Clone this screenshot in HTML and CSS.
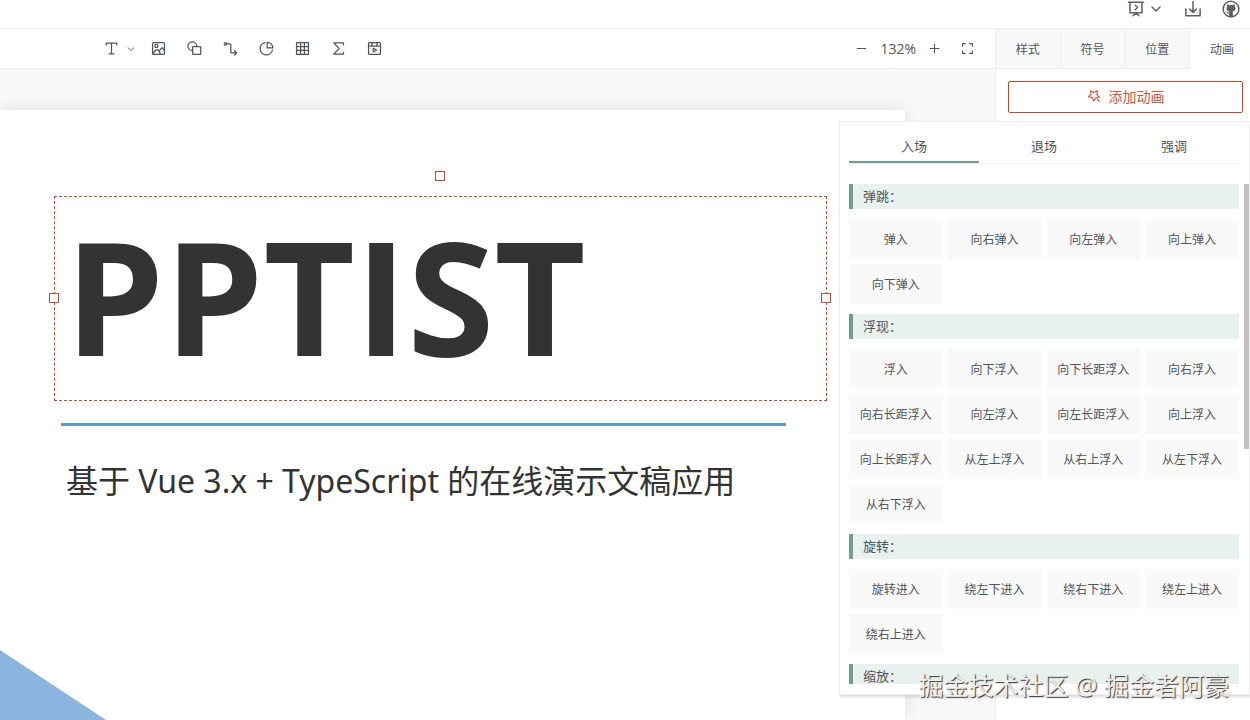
FILE: index.html
```html
<!DOCTYPE html>
<html lang="zh-CN">
<head>
  <meta charset="UTF-8" />
  <meta name="viewport" content="width=device-width, initial-scale=1.0"/>
  <title>PPTist</title>
  <link rel="stylesheet" href="styles.css">
</head>
<body>
  <div class="app">
    <header class="header">
      <button class="icon-btn screening" aria-label="放映">
        <svg class="icon" viewBox="0 0 48 48"><path d="M4 6h40M8 6h32v28H8zM22 14l6 6-6 6M16 42l8-7 8 7"/></svg>
        <svg class="icon arrow" viewBox="0 0 48 48"><path d="M8 16l16 16 16-16"/></svg>
      </button>
      <button class="icon-btn" aria-label="导出">
        <svg class="icon" viewBox="0 0 48 48"><path d="M5 24v18h38V24M33 24l-9 9-9-9M24 4v29"/></svg>
      </button>
      <a class="icon-btn" href="#" aria-label="GitHub">
        <svg class="icon" viewBox="0 0 48 48"><circle cx="24" cy="24" r="21"/><path class="fill" d="M19 44v-8c-5 1-6-3-9-5 4-1 5 3 9 2l1-2c-5-1-8-4-8-9 0-2 1-4 2-5-1-3 0-5 0-6 3 0 4 1 6 3 3-1 5-1 8 0 2-2 3-3 6-3 0 1 1 3 0 6 1 1 2 3 2 5 0 5-3 8-8 9l1 4v9z"/></svg>
      </a>
    </header>

    <div class="main">
      <div class="center">
        <div class="toolbar">
          <div class="insert-tools">
            <button class="icon-btn text-tool" aria-label="文本">
              <svg class="icon" viewBox="0 0 48 48"><path d="M7 13V7h34v6M24 7v34M16 41h16"/></svg>
              <svg class="icon arrow" viewBox="0 0 48 48"><path d="M8 17l16 16 16-16"/></svg>
            </button>
            <button class="icon-btn" aria-label="图片">
              <svg class="icon" viewBox="0 0 48 48"><rect x="5" y="5" width="38" height="38" rx="3"/><circle cx="17" cy="16" r="5"/><path d="M8 39c3-8 8-13 16-10l6 13M27 31l8-10 8 10"/></svg>
            </button>
            <button class="icon-btn" aria-label="形状">
              <svg class="icon" viewBox="0 0 48 48"><path d="M17 31a14 14 0 1 1 14-14"/><rect x="18" y="18" width="26" height="25" rx="2"/></svg>
            </button>
            <button class="icon-btn" aria-label="线条">
              <svg class="icon" viewBox="0 0 48 48"><circle cx="8" cy="9" r="4"/><path d="M12 9h10q3 0 3 3v23q0 3 3 3h15M37 31l7 7-7 7"/></svg>
            </button>
            <button class="icon-btn" aria-label="图表">
              <svg class="icon" viewBox="0 0 48 48"><path d="M19 5A20 20 0 1 0 43 29M26 4v18h18C44 12 36 4 26 4z"/></svg>
            </button>
            <button class="icon-btn" aria-label="表格">
              <svg class="icon" viewBox="0 0 48 48"><rect x="5" y="5" width="38" height="38" rx="1"/><path d="M5 18h38M5 30h38M18 5v38M30 5v38"/></svg>
            </button>
            <button class="icon-btn" aria-label="公式">
              <svg class="icon" viewBox="0 0 48 48"><path d="M40 12V6H9l17 18L9 42h31v-6"/></svg>
            </button>
            <button class="icon-btn" aria-label="音视频">
              <svg class="icon" viewBox="0 0 48 48"><rect x="5" y="5" width="38" height="38" rx="3"/><path d="M5 16h38M18 5l-4 11M34 5l-4 11M20 23v12l11-6z"/></svg>
            </button>
          </div>
          <div class="zoom-tools">
            <button class="icon-btn" aria-label="缩小">
              <svg class="icon" viewBox="0 0 48 48"><path d="M8 24h32"/></svg>
            </button>
            <span class="zoom-value">132%</span>
            <button class="icon-btn" aria-label="放大">
              <svg class="icon" viewBox="0 0 48 48"><path d="M8 24h32M24 8v32"/></svg>
            </button>
            <button class="icon-btn fit" aria-label="适应屏幕">
              <svg class="icon" viewBox="0 0 48 48"><path d="M16 6H6v10M32 6h10v10M16 42H6V32M32 42h10V32"/></svg>
            </button>
          </div>
        </div>

        <div class="canvas">
          <div class="slide">
            <h1 class="slide-title">PPTIST</h1>
            <div class="slide-line"></div>
            <p class="slide-subtitle">基于 Vue 3.x + TypeScript 的在线演示文稿应用</p>
            <svg class="slide-shape" viewBox="0 0 106 70"><path d="M0 0L106 70H0z"/></svg>
            <div class="selection">
              <i class="handle rotate"></i>
              <i class="handle left"></i>
              <i class="handle right"></i>
            </div>
          </div>
        </div>
      </div>

      <aside class="sidebar">
        <nav class="side-tabs">
          <button class="side-tab">样式</button>
          <button class="side-tab">符号</button>
          <button class="side-tab">位置</button>
          <button class="side-tab active">动画</button>
        </nav>
        <div class="side-content">
          <button class="add-btn">
            <svg class="icon" viewBox="0 0 48 48"><path d="M12 6l11 6 13-6-2 14 9 9-13 1-7 11-5-12-13-3 9-8zM34 34l8 8"/></svg>
            添加动画
          </button>
        </div>
      </aside>
    </div>

    <div class="popover">
      <div class="pop-tabs">
        <button class="pop-tab active">入场</button>
        <button class="pop-tab">退场</button>
        <button class="pop-tab">强调</button>
      </div>
      <div class="pool">
        <section class="group">
          <h2 class="group-title">弹跳：</h2>
          <div class="group-list">
            <button class="anim">弹入</button>
            <button class="anim">向右弹入</button>
            <button class="anim">向左弹入</button>
            <button class="anim">向上弹入</button>
            <button class="anim">向下弹入</button>
          </div>
        </section>
        <section class="group">
          <h2 class="group-title">浮现：</h2>
          <div class="group-list">
            <button class="anim">浮入</button>
            <button class="anim">向下浮入</button>
            <button class="anim">向下长距浮入</button>
            <button class="anim">向右浮入</button>
            <button class="anim">向右长距浮入</button>
            <button class="anim">向左浮入</button>
            <button class="anim">向左长距浮入</button>
            <button class="anim">向上浮入</button>
            <button class="anim">向上长距浮入</button>
            <button class="anim">从左上浮入</button>
            <button class="anim">从右上浮入</button>
            <button class="anim">从左下浮入</button>
            <button class="anim">从右下浮入</button>
          </div>
        </section>
        <section class="group">
          <h2 class="group-title">旋转：</h2>
          <div class="group-list">
            <button class="anim">旋转进入</button>
            <button class="anim">绕左下进入</button>
            <button class="anim">绕右下进入</button>
            <button class="anim">绕左上进入</button>
            <button class="anim">绕右上进入</button>
          </div>
        </section>
        <section class="group">
          <h2 class="group-title">缩放：</h2>
        </section>
      </div>
      <div class="scroll-thumb"></div>
    </div>

    <div class="watermark">掘金技术社区 @ 掘金者阿豪</div>
  </div>
</body>
</html>
```

FILE: styles.css
```css
* {
  box-sizing: border-box;
}
body {
  margin: 0;
  font-family: "Open Sans", "Noto Sans CJK SC", sans-serif;
  font-size: 13px;
  color: #50555a;
  background: #fff;
}
button {
  font: inherit;
  color: inherit;
  background: none;
  border: none;
  padding: 0;
  cursor: pointer;
}
.app {
  position: relative;
  height: 100vh;
  overflow: hidden;
  display: flex;
  flex-direction: column;
}
.icon {
  display: block;
  width: 15px;
  height: 15px;
  fill: none;
  stroke: currentColor;
  stroke-width: 4;
  stroke-linejoin: round;
  stroke-linecap: round;
}
.icon .fill {
  fill: currentColor;
  stroke: none;
}
.icon-btn {
  display: flex;
  align-items: center;
  color: inherit;
}

/* header */
.header {
  flex: none;
  height: 29px;
  padding: 0 10px 10px 0;
  display: flex;
  justify-content: flex-end;
  align-items: center;
  gap: 20px;
  border-bottom: 1px solid #eee;
  color: #606060;
}
.header .icon {
  width: 18px;
  height: 18px;
}
.screening {
  gap: 5px;
}
.header .screening .arrow {
  width: 12px;
  height: 12px;
  margin-right: 2px;
  stroke-width: 6;
}

.main {
  flex: 1;
  min-height: 0;
  display: flex;
}
.center {
  flex: 1;
  min-width: 0;
  display: flex;
  flex-direction: column;
}

/* toolbar */
.toolbar {
  flex: none;
  height: 40px;
  padding: 0 21px 0 104px;
  display: flex;
  justify-content: space-between;
  align-items: center;
  border-bottom: 1px solid #eee;
}
.insert-tools {
  display: flex;
  align-items: center;
  gap: 21px;
}
.insert-tools .icon-btn {
  width: 15px;
}
.insert-tools .text-tool {
  width: 32px;
  gap: 8px;
  margin-right: -6px;
}
.insert-tools .arrow {
  width: 8px;
  height: 8px;
  stroke-width: 6;
}
.zoom-tools {
  display: flex;
  align-items: center;
  gap: 12px;
}
.zoom-value {
  font-size: 14px;
}
.zoom-tools .icon {
  width: 13px;
  height: 13px;
}
.fit {
  margin-left: 8px;
}

/* canvas */
.canvas {
  flex: 1;
  min-height: 0;
  padding: 41px 90px 0 0;
  background: #f8f8f8;
  overflow: hidden;
}
.slide {
  position: relative;
  height: 100%;
  background: #fff;
  box-shadow: 0 0 15px rgba(0,0,0,0.1);
}
.slide-title {
  position: absolute;
  left: 65px;
  top: 78px;
  margin: 0;
  font-size: 158px;
  line-height: 214px;
  font-weight: 700;
  color: #333;
}
.slide-line {
  position: absolute;
  left: 61px;
  top: 313px;
  width: 725px;
  height: 3px;
  background: #5b9bc8;
}
.slide-subtitle {
  position: absolute;
  left: 66px;
  top: 347px;
  margin: 0;
  font-family: "Noto Sans", "Noto Sans CJK SC", sans-serif;
  font-size: 32px;
  line-height: 48px;
  color: #333;
  white-space: nowrap;
}
.slide-shape {
  position: absolute;
  left: 0;
  bottom: 0;
  width: 106px;
  height: 70px;
  fill: #8bb5df;
}
.selection {
  position: absolute;
  left: 54px;
  top: 86px;
  width: 773px;
  height: 205px;
  border: 1px dashed #b8503a;
}
.handle {
  position: absolute;
  width: 10px;
  height: 10px;
  border: 1px solid #b8503a;
  background: #fff;
}
.rotate {
  left: 380px;
  top: -26px;
}
.left {
  left: -6px;
  top: 96px;
}
.right {
  right: -5px;
  top: 96px;
}

/* sidebar */
.sidebar {
  flex: none;
  width: 260px;
  margin-right: -5px;
  border-left: 1px solid #eee;
}
.side-tabs {
  display: flex;
  height: 40px;
}
.side-tab {
  flex: 1;
  font-size: 12px;
  background: #f8f8f8;
  border-right: 1px solid #eee;
  border-bottom: 1px solid #eee;
}
.side-tab.active {
  background: #fff;
  border-color: transparent;
}
.side-content {
  padding: 12px;
}
.add-btn {
  width: 100%;
  height: 32px;
  padding-bottom: 2px;
  display: flex;
  justify-content: center;
  align-items: center;
  gap: 8px;
  font-size: 14px;
  color: #c45a42;
  border: 1px solid #c0492f;
  border-radius: 2px;
}
.add-btn .icon {
  width: 14px;
  height: 14px;
}

/* animation popover */
.popover {
  position: absolute;
  right: 0;
  top: 121px;
  width: 411px;
  padding: 10px 10px 10px 9px;
  background: #fff;
  border: 1px solid #eee;
  box-shadow: 1px 2px 3px rgba(0,0,0,0.15);
}
.pop-tabs {
  display: flex;
  margin-bottom: 20px;
  border-bottom: 1px solid #f0f0f0;
}
.pop-tab {
  flex: 1;
  height: 31px;
  padding-bottom: 2px;
  border-bottom: 2px solid transparent;
}
.pop-tab.active {
  border-bottom-color: #6fa08f;
}
.pool {
  height: 500px;
  overflow: hidden;
}
.group {
  margin-bottom: 10px;
}
.group-title {
  margin: 0 0 10px;
  height: 25px;
  padding-left: 10px;
  font-size: 13px;
  line-height: 25px;
  font-weight: 400;
  background: #e8f1ee;
  border-left: 4px solid #6fa08f;
}
.group-list {
  display: grid;
  grid-template-columns: repeat(4, 1fr);
  gap: 5px;
}
.anim {
  height: 40px;
  font-size: 12px;
  background: #f9f9f9;
  white-space: nowrap;
}
.scroll-thumb {
  position: absolute;
  right: 0;
  top: 62px;
  width: 5px;
  height: 265px;
  background: #c1c1c1;
}

.watermark {
  position: absolute;
  right: 21px;
  bottom: 17px;
  font-size: 25px;
  line-height: 36px;
  color: #eee;
  text-shadow: 1px 1px 1px #333;
}
```
